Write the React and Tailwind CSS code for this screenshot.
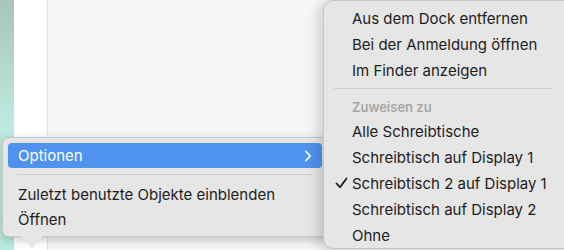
import React from "react";

const font = { fontFamily: "Inter, 'Noto Sans', sans-serif" };

function MenuItem({ children, checked }) {
  return (
    <div className="relative h-[26px] flex items-center pl-[28px] text-[15px] text-[#1d1d1d] leading-none">
      {checked && (
        <svg
          className="absolute left-[11px] top-[7px]"
          width="13"
          height="12"
          viewBox="0 0 13 12"
          fill="none"
        >
          <path d="M1.5 6.5 L5 10.2 L11.5 1.5" stroke="#1d1d1d" strokeWidth="1.8" strokeLinecap="round" strokeLinejoin="round" />
        </svg>
      )}
      {children}
    </div>
  );
}

export default function App() {
  return (
    <div className="relative w-[564px] h-[250px] overflow-hidden" style={font}>
      {/* desktop / window behind */}
      <div className="flex h-full">
        <div className="w-[14px] h-full bg-gradient-to-b from-[#a9c4b9] via-[#bdeadf] to-[#b8eade]" />
        <div className="w-[34px] h-full bg-white border-r border-[#e3e4e8]" />
        <div className="flex-1 h-full bg-[#f5f6f8]" />
      </div>

      {/* app context menu */}
      <div className="absolute left-[2px] top-[137px] w-[328px] h-[100px] rounded-[7px] bg-[#e6e6e6] border border-[#c9c9c9] shadow-[0_3px_10px_rgba(0,0,0,0.22)] pl-[5px] pr-[7px] pt-[5px]">
        <div className="h-[25px] rounded-[4px] bg-[#4f93ee] flex items-center justify-between pl-[10px] pr-[10px] text-[15px] text-white leading-none">
          <span>Optionen</span>
          <svg width="8" height="12" viewBox="0 0 8 12" fill="none">
            <path d="M2 1.5 L6.2 6 L2 10.5" stroke="white" strokeWidth="1.8" strokeLinecap="round" strokeLinejoin="round" />
          </svg>
        </div>
        <div className="mx-[9px] my-[6px] h-px bg-[#cdcdcd]" />
        <div className="h-[25px] flex items-center pl-[10px] pt-[1px] text-[15px] text-[#1d1d1d] leading-none">
          Zuletzt benutzte Objekte einblenden
        </div>
        <div className="h-[25px] flex items-center pl-[10px] pt-[1px] text-[15px] text-[#1d1d1d] leading-none">
          Öffnen
        </div>
      </div>
      {/* menu tail */}
      <div className="absolute left-[21px] top-[236px] w-0 h-0 border-l-[11px] border-r-[11px] border-t-[12px] border-l-transparent border-r-transparent border-t-[#e6e6e6]" />

      {/* options submenu */}
      <div className="absolute left-[323px] top-[0px] w-[250px] h-[249px] rounded-[10px] bg-[#e6e6e6] border border-[#c6c6c6] shadow-[-4px_2px_14px_rgba(0,0,0,0.18)] pt-[4px]">
        <MenuItem>Aus dem Dock entfernen</MenuItem>
        <MenuItem>Bei der Anmeldung öffnen</MenuItem>
        <MenuItem>Im Finder anzeigen</MenuItem>
        <div className="ml-[10px] mr-[20px] mt-[5px] mb-[8px] h-px bg-[#cfcfcf]" />
        <div className="h-[21px] flex items-center pl-[28px] text-[13px] font-semibold text-[#a6a6a6] leading-none">
          Zuweisen zu
        </div>
        <MenuItem>Alle Schreibtische</MenuItem>
        <MenuItem>Schreibtisch auf Display 1</MenuItem>
        <MenuItem checked>Schreibtisch 2 auf Display 1</MenuItem>
        <MenuItem>Schreibtisch auf Display 2</MenuItem>
        <MenuItem>Ohne</MenuItem>
      </div>
    </div>
  );
}
